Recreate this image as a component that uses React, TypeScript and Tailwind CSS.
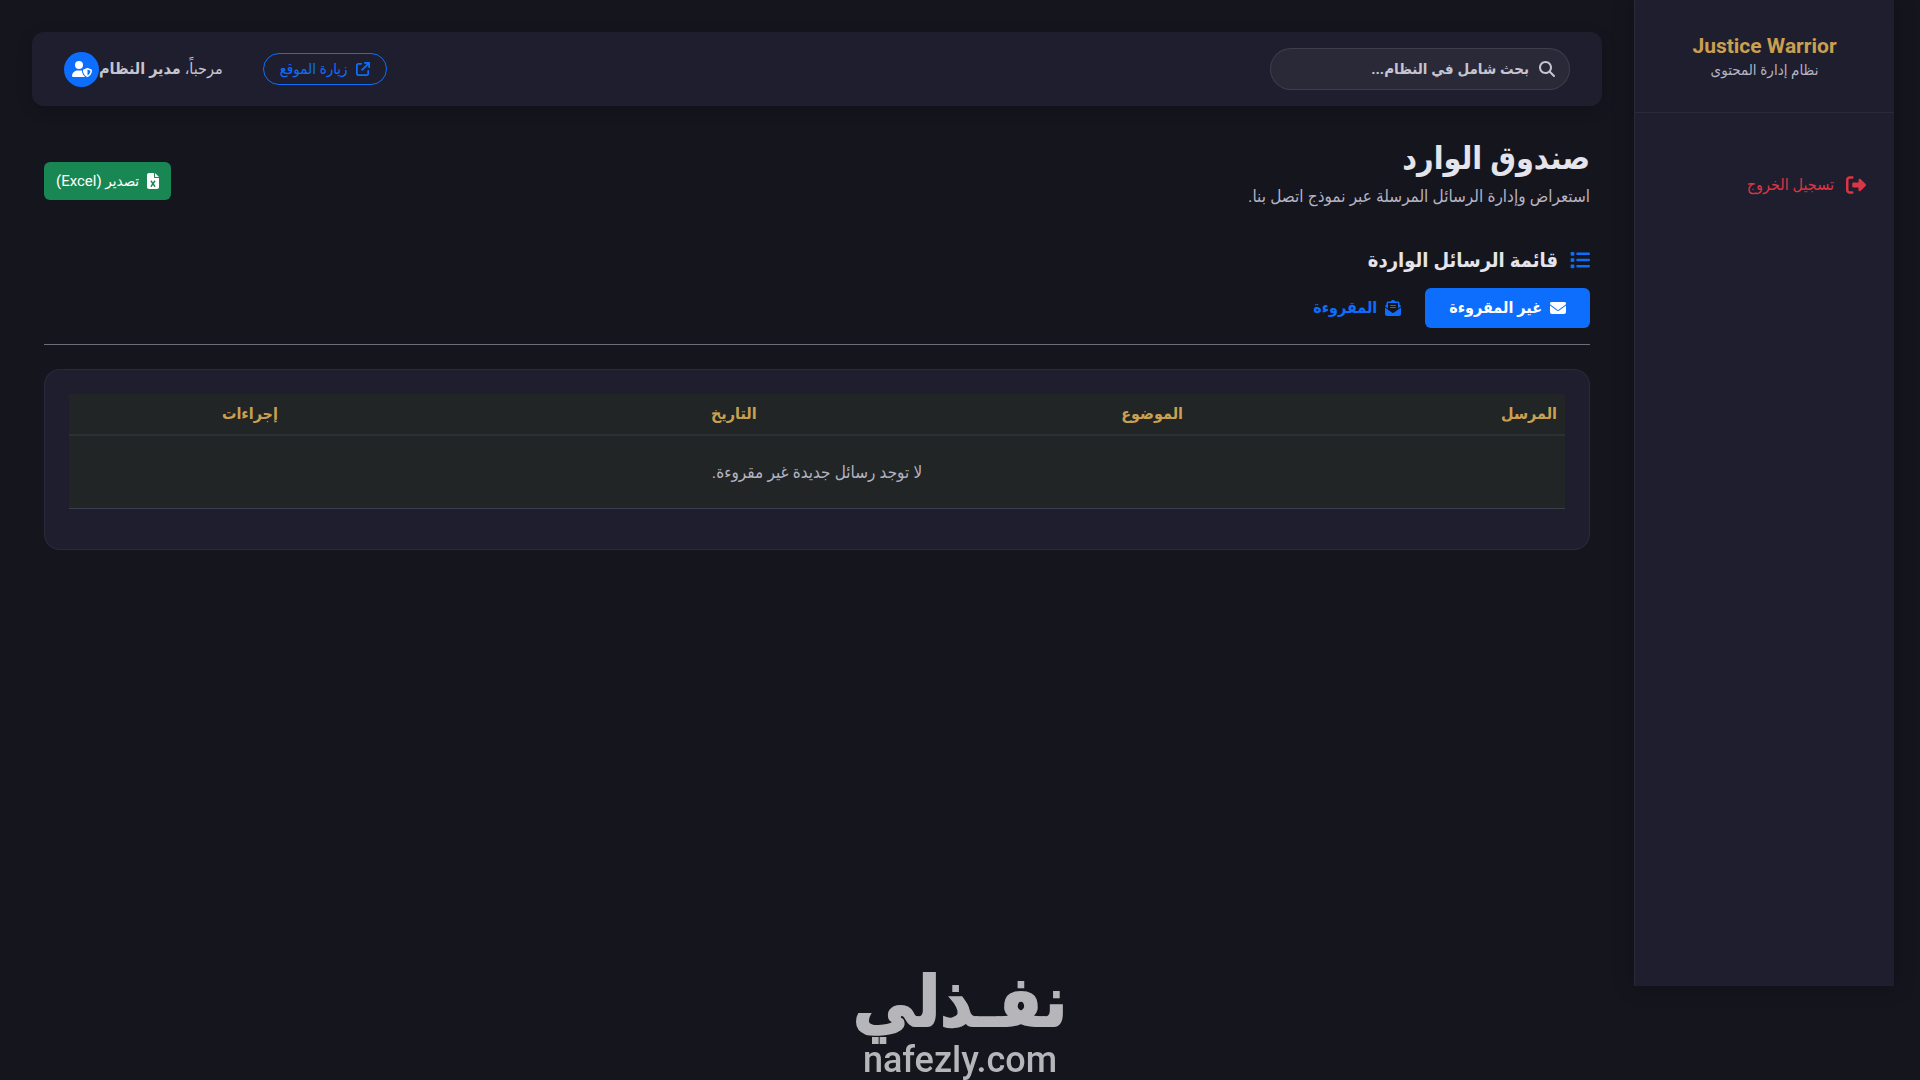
import type { ReactNode } from "react";
import {
  FaArrowUpRightFromSquare,
  FaEnvelope,
  FaEnvelopeOpenText,
  FaFileExcel,
  FaList,
  FaMagnifyingGlass,
  FaRightFromBracket,
  FaUserShield,
} from "react-icons/fa6";

const columns = [
  { label: "المرسل", width: "w-[25%]" },
  { label: "الموضوع", width: "w-[28.5%]" },
  { label: "التاريخ", width: "w-[32%]" },
  { label: "إجراءات", width: "w-[14.5%]" },
];

function Sidebar() {
  return (
    <aside className="h-[calc(100vh-94px)] w-[260px] shrink-0 border-l border-white/5 bg-[#1f1e2e] shadow-[0_0_20px_rgba(0,0,0,0.3)]">
      <div className="flex flex-col items-center border-b border-white/5 px-6 py-8 text-center">
        <h3 className="text-[21px] leading-7 font-bold text-[#c9a050]">Justice Warrior</h3>
        <small className="text-[15px] leading-5 text-[#b4b3c1]">نظام إدارة المحتوى</small>
      </div>
      <nav className="px-7 pt-[54px]">
        <a href="#logout" className="flex items-center gap-3 py-1 text-[16px] leading-7 text-[#dc3545]">
          <FaRightFromBracket className="size-5" />
          تسجيل الخروج
        </a>
      </nav>
    </aside>
  );
}

function TopBar() {
  return (
    <header className="flex items-center justify-between rounded-xl bg-[#1f1e2e] px-8 py-4 shadow-[0_4px_15px_rgba(0,0,0,0.2)]">
      <label className="flex h-[42px] w-[300px] items-center gap-2.5 rounded-full border border-white/10 bg-[#2a2938] px-3.5 text-[#c5c4cf]">
        <FaMagnifyingGlass className="size-4" aria-hidden="true" />
        <input
          type="search"
          aria-label="بحث شامل في النظام"
          placeholder="بحث شامل في النظام..."
          className="min-w-0 flex-1 bg-transparent text-[15px] leading-6 font-bold outline-none placeholder:text-[#c5c4cf]"
        />
      </label>
      <div className="flex items-center gap-10">
        <a
          href="#site"
          className="flex h-8 items-center gap-2 rounded-full border border-[#0d6efd] px-4 text-[15px] leading-5 text-[#0d6efd]"
        >
          <FaArrowUpRightFromSquare className="size-3.5" />
          زيارة الموقع
        </a>
        <div className="flex items-center text-[16px] leading-6 text-[#c5c4cf]">
          <span>
            مرحباً، <strong>مدير النظام</strong>
          </span>
          <span className="flex size-[35px] items-center justify-center rounded-full bg-[#0d6efd] text-white">
            <FaUserShield className="size-5" />
          </span>
        </div>
      </div>
    </header>
  );
}

function Tab({ active, icon, children }: { active?: boolean; icon: ReactNode; children: ReactNode }) {
  return (
    <button
      type="button"
      role="tab"
      aria-selected={!!active}
      className={
        active
          ? "flex h-10 items-center gap-2 rounded-md bg-[#0d6efd] px-6 text-[16px] font-bold text-white"
          : "flex h-10 items-center gap-2 rounded-md px-6 text-[16px] font-bold text-[#0d6efd]"
      }
    >
      {icon}
      {children}
    </button>
  );
}

function MessagesTable() {
  return (
    <section className="rounded-2xl border border-white/5 bg-[#1f1e2e] px-6 pt-6 pb-10">
      <table className="w-full table-fixed border-collapse bg-[#212526]">
        <thead>
          <tr className="border-b-2 border-[#2c3032]">
            {columns.map((c) => (
              <th key={c.label} className={`${c.width} px-2 py-2 text-start text-[16px] leading-6 font-bold text-[#c9a050]`}>
                {c.label}
              </th>
            ))}
          </tr>
        </thead>
        <tbody>
          <tr className="border-b border-[#3b3e4b]">
            <td colSpan={4} className="px-2 py-6 text-center text-[17px] leading-6 text-[#b4b3c1]">
              لا توجد رسائل جديدة غير مقروءة.
            </td>
          </tr>
        </tbody>
      </table>
    </section>
  );
}

function Watermark() {
  return (
    <div className="pointer-events-none fixed inset-x-0 bottom-0 flex flex-col items-center pb-0.5 text-[#b5b5ba]">
      <span className="mb-1 text-[70px] leading-[72px] font-bold [-webkit-text-stroke:2px_#b5b5ba]">نفـذلي</span>
      <span className="text-[36px] leading-9 font-medium">nafezly.com</span>
    </div>
  );
}

export default function App() {
  return (
    <div
      dir="rtl"
      className="flex min-h-screen bg-[#15151e] pr-[26px] font-['Roboto','DejaVu_Sans_Condensed','DejaVu_Sans',sans-serif]"
    >
      <Sidebar />
      <main className="min-w-0 flex-1 p-8">
        <TopBar />
        <div className="px-3 pt-8">
          <div className="flex items-center justify-between">
            <div className="pb-4">
              <h1 className="mb-1.5 text-[32px] leading-10 font-bold text-[#e4e4ea]">صندوق الوارد</h1>
              <p className="text-[17px] leading-6 text-[#b4b3c1]">
                استعراض وإدارة الرسائل المرسلة عبر نموذج اتصل بنا.
              </p>
            </div>
            <button
              type="button"
              className="flex h-[38px] items-center gap-2 rounded-md bg-[#198754] px-3 text-[15px] text-white"
            >
              <FaFileExcel className="h-4 w-3" />
              تصدير (Excel)
            </button>
          </div>
          <h2 className="mt-[22px] flex items-center gap-3 text-[20px] leading-7 font-bold text-[#e4e4ea]">
            <FaList className="size-5 text-[#0d6efd]" />
            قائمة الرسائل الواردة
          </h2>
          <div role="tablist" className="mt-3.5 mb-6 flex border-b border-[#6c6d78] pb-4">
            <Tab active icon={<FaEnvelope className="size-4" />}>
              غير المقروءة
            </Tab>
            <Tab icon={<FaEnvelopeOpenText className="size-4" />}>المقروءة</Tab>
          </div>
          <MessagesTable />
        </div>
      </main>
      <Watermark />
    </div>
  );
}
